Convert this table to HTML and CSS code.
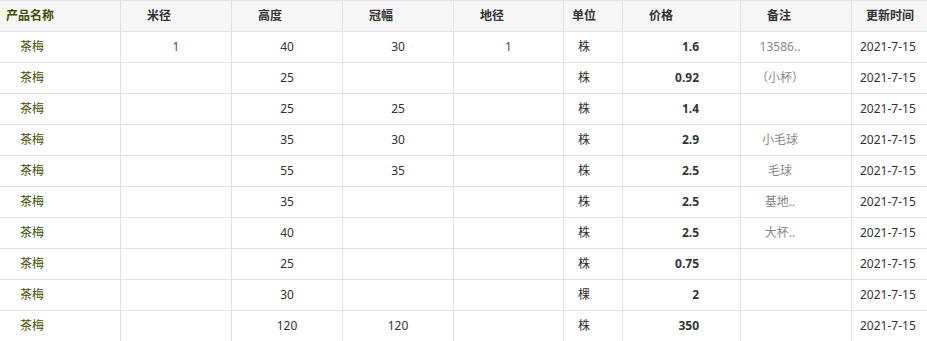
FILE: index.html
```html
<!DOCTYPE html>
<html lang="zh-CN">
<head>
    <meta charset="UTF-8">
    <meta name="viewport" content="width=device-width, initial-scale=1.0">
    <title>苗木价格表</title>
    <link rel="stylesheet" href="styles.css">
</head>
<body>
    <div class="price-table">
        <div class="row head">
            <div class="cell c-name">产品名称</div>
            <div class="cell">米径</div>
            <div class="cell">高度</div>
            <div class="cell">冠幅</div>
            <div class="cell">地径</div>
            <div class="cell c-unit">单位</div>
            <div class="cell">价格</div>
            <div class="cell">备注</div>
            <div class="cell c-date">更新时间</div>
        </div>

        <div class="row">
            <div class="cell c-name">茶梅</div>
            <div class="cell num alt">1</div>
            <div class="cell num">40</div>
            <div class="cell num">30</div>
            <div class="cell num alt">1</div>
            <div class="cell c-unit">株</div>
            <div class="cell c-price">1.6</div>
            <div class="cell c-note">13586..</div>
            <div class="cell c-date">2021-7-15</div>
        </div>
        <div class="row">
            <div class="cell c-name">茶梅</div>
            <div class="cell num alt"></div>
            <div class="cell num">25</div>
            <div class="cell num"></div>
            <div class="cell num alt"></div>
            <div class="cell c-unit">株</div>
            <div class="cell c-price">0.92</div>
            <div class="cell c-note">（小杯）</div>
            <div class="cell c-date">2021-7-15</div>
        </div>
        <div class="row">
            <div class="cell c-name">茶梅</div>
            <div class="cell num alt"></div>
            <div class="cell num">25</div>
            <div class="cell num">25</div>
            <div class="cell num alt"></div>
            <div class="cell c-unit">株</div>
            <div class="cell c-price">1.4</div>
            <div class="cell c-note"></div>
            <div class="cell c-date">2021-7-15</div>
        </div>
        <div class="row">
            <div class="cell c-name">茶梅</div>
            <div class="cell num alt"></div>
            <div class="cell num">35</div>
            <div class="cell num">30</div>
            <div class="cell num alt"></div>
            <div class="cell c-unit">株</div>
            <div class="cell c-price">2.9</div>
            <div class="cell c-note">小毛球</div>
            <div class="cell c-date">2021-7-15</div>
        </div>
        <div class="row">
            <div class="cell c-name">茶梅</div>
            <div class="cell num alt"></div>
            <div class="cell num">55</div>
            <div class="cell num">35</div>
            <div class="cell num alt"></div>
            <div class="cell c-unit">株</div>
            <div class="cell c-price">2.5</div>
            <div class="cell c-note">毛球</div>
            <div class="cell c-date">2021-7-15</div>
        </div>
        <div class="row">
            <div class="cell c-name">茶梅</div>
            <div class="cell num alt"></div>
            <div class="cell num">35</div>
            <div class="cell num"></div>
            <div class="cell num alt"></div>
            <div class="cell c-unit">株</div>
            <div class="cell c-price">2.5</div>
            <div class="cell c-note">基地..</div>
            <div class="cell c-date">2021-7-15</div>
        </div>
        <div class="row">
            <div class="cell c-name">茶梅</div>
            <div class="cell num alt"></div>
            <div class="cell num">40</div>
            <div class="cell num"></div>
            <div class="cell num alt"></div>
            <div class="cell c-unit">株</div>
            <div class="cell c-price">2.5</div>
            <div class="cell c-note">大杯..</div>
            <div class="cell c-date">2021-7-15</div>
        </div>
        <div class="row">
            <div class="cell c-name">茶梅</div>
            <div class="cell num alt"></div>
            <div class="cell num">25</div>
            <div class="cell num"></div>
            <div class="cell num alt"></div>
            <div class="cell c-unit">株</div>
            <div class="cell c-price">0.75</div>
            <div class="cell c-note"></div>
            <div class="cell c-date">2021-7-15</div>
        </div>
        <div class="row">
            <div class="cell c-name">茶梅</div>
            <div class="cell num alt"></div>
            <div class="cell num">30</div>
            <div class="cell num"></div>
            <div class="cell num alt"></div>
            <div class="cell c-unit">棵</div>
            <div class="cell c-price">2</div>
            <div class="cell c-note"></div>
            <div class="cell c-date">2021-7-15</div>
        </div>
        <div class="row">
            <div class="cell c-name">茶梅</div>
            <div class="cell num alt"></div>
            <div class="cell num">120</div>
            <div class="cell num">120</div>
            <div class="cell num alt"></div>
            <div class="cell c-unit">株</div>
            <div class="cell c-price">350</div>
            <div class="cell c-note"></div>
            <div class="cell c-date">2021-7-15</div>
        </div>
    </div>
</body>
</html>
```

FILE: styles.css
```css
body {
    margin: 0;
    background: #fff;
    font-family: "Noto Sans", "Noto Sans CJK SC", sans-serif;
    font-size: 12px;
    color: #333;
    overflow: hidden;
}
.price-table {
    width: 940px;
    border-top: 1px solid #e2e2e2;
}
.row {
    display: grid;
    grid-template-columns: 121px 111px 111px 111px 110px 59px 118px 111px 88px;
    height: 30px;
    border-bottom: 1px solid #e2e2e2;
}
.cell {
    box-sizing: border-box;
    border-right: 1px solid #e2e2e2;
    line-height: 30px;
    white-space: nowrap;
    overflow: hidden;
}
.head {
    background: #f6f6f6;
    font-weight: bold;
}
.head .cell {
    padding-left: 26px;
}
.head .c-name {
    padding-left: 6px;
}
.head .c-unit {
    padding-left: 8px;
}
.head .c-date {
    padding-left: 14px;
}
.c-name {
    padding-left: 20px;
    color: #3d5200;
}
.num {
    text-align: center;
}
.num.alt {
    color: #5a3f5e;
}
.c-unit {
    padding-left: 14px;
}
.c-price {
    text-align: right;
    padding-right: 41px;
    font-weight: bold;
}
.c-note {
    text-align: center;
    padding-right: 32px;
    color: #888;
}
.c-date {
    padding-left: 8px;
    border-right: none;
}
```
